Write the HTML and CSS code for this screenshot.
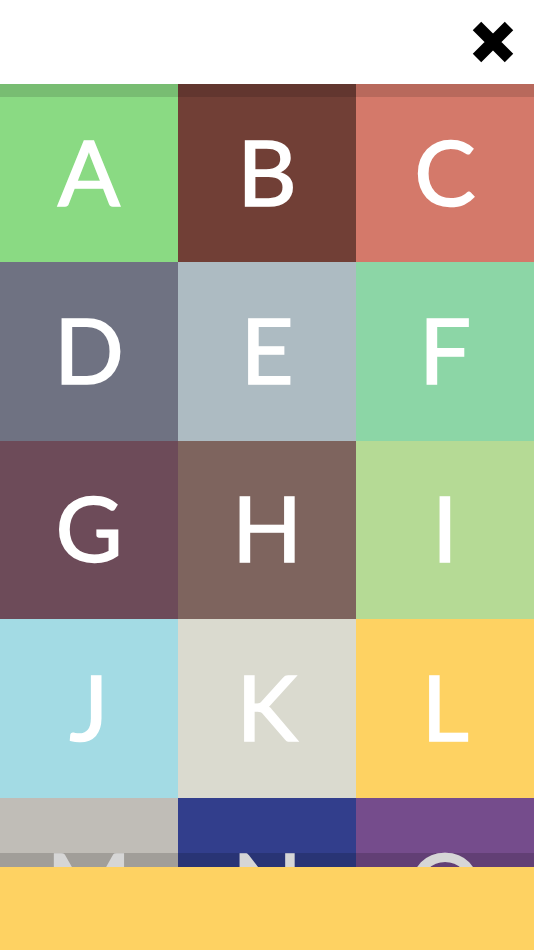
FILE: index.html
```
<!DOCTYPE html>
<html>
<head>
<meta charset="utf-8">
<link rel="stylesheet" href="styles.css">
</head>
<body>
<div class="app">
  <header class="topbar">
    <button class="close" aria-label="Close">
      <svg width="42" height="42" viewBox="0 0 42 42"><path d="M5 5 L37 37 M37 5 L5 37" stroke="#000" stroke-width="12" fill="none"/></svg>
    </button>
  </header>
  <main class="grid-wrap">
    <div class="grid">
      <div class="cell c-a">A</div>
      <div class="cell c-b">B</div>
      <div class="cell c-c">C</div>
      <div class="cell c-d">D</div>
      <div class="cell c-e">E</div>
      <div class="cell c-f">F</div>
      <div class="cell c-g">G</div>
      <div class="cell c-h">H</div>
      <div class="cell c-i">I</div>
      <div class="cell c-j">J</div>
      <div class="cell c-k">K</div>
      <div class="cell c-l">L</div>
      <div class="cell c-m">M</div>
      <div class="cell c-n">N</div>
      <div class="cell c-o">O</div>
    </div>
  </main>
  <footer class="bottombar"></footer>
</div>
</body>
</html>
```
FILE: styles.css
```
html, body {
  margin: 0;
  padding: 0;
  width: 534px;
  height: 950px;
  overflow: hidden;
  background: #fff;
}
.app {
  display: flex;
  flex-direction: column;
  height: 950px;
}
.topbar {
  position: relative;
  height: 84px;
  flex: 0 0 84px;
  display: flex;
  align-items: center;
  justify-content: flex-end;
  padding-right: 20px;
  background: #fff;
  z-index: 2;
}
.topbar::after {
  content: "";
  position: absolute;
  left: 0;
  right: 0;
  top: 84px;
  height: 13px;
  background: rgba(0, 0, 0, 0.13);
}
.close {
  border: 0;
  background: none;
  padding: 0;
  width: 42px;
  height: 42px;
  display: block;
}
.close svg { display: block; }
.grid-wrap {
  flex: 1 1 auto;
  overflow: hidden;
}
.grid {
  display: grid;
  grid-template-columns: repeat(3, 178px);
  grid-auto-rows: 178.4px;
}
.cell {
  display: flex;
  align-items: center;
  justify-content: center;
  padding-bottom: 5px;
  box-sizing: border-box;
  color: #fff;
  font-family: Lato, "Liberation Sans", sans-serif;
  font-weight: 400;
  font-size: 92px;
  line-height: 1;
  -webkit-text-stroke: 1.6px #fff;
}
.c-a { background: #8ada83; }
.c-b { background: #713f36; }
.c-c { background: #d4796a; }
.c-d { background: #6f7282; }
.c-e { background: #adbbc2; }
.c-f { background: #8cd6a6; }
.c-g { background: #6d4b59; }
.c-h { background: #7e645e; }
.c-i { background: #b5da95; }
.c-j { background: #a3dbe4; }
.c-k { background: #dadacf; }
.c-l { background: #fed262; }
.c-m { background: #c0bdb7; }
.c-n { background: #323e8c; }
.c-o { background: #754c8c; }
.bottombar {
  position: relative;
  flex: 0 0 83px;
  height: 83px;
  background: #fed262;
}
.bottombar::before {
  content: "";
  position: absolute;
  left: 0;
  right: 0;
  top: -14px;
  height: 14px;
  background: rgba(0, 0, 0, 0.16);
}
```
